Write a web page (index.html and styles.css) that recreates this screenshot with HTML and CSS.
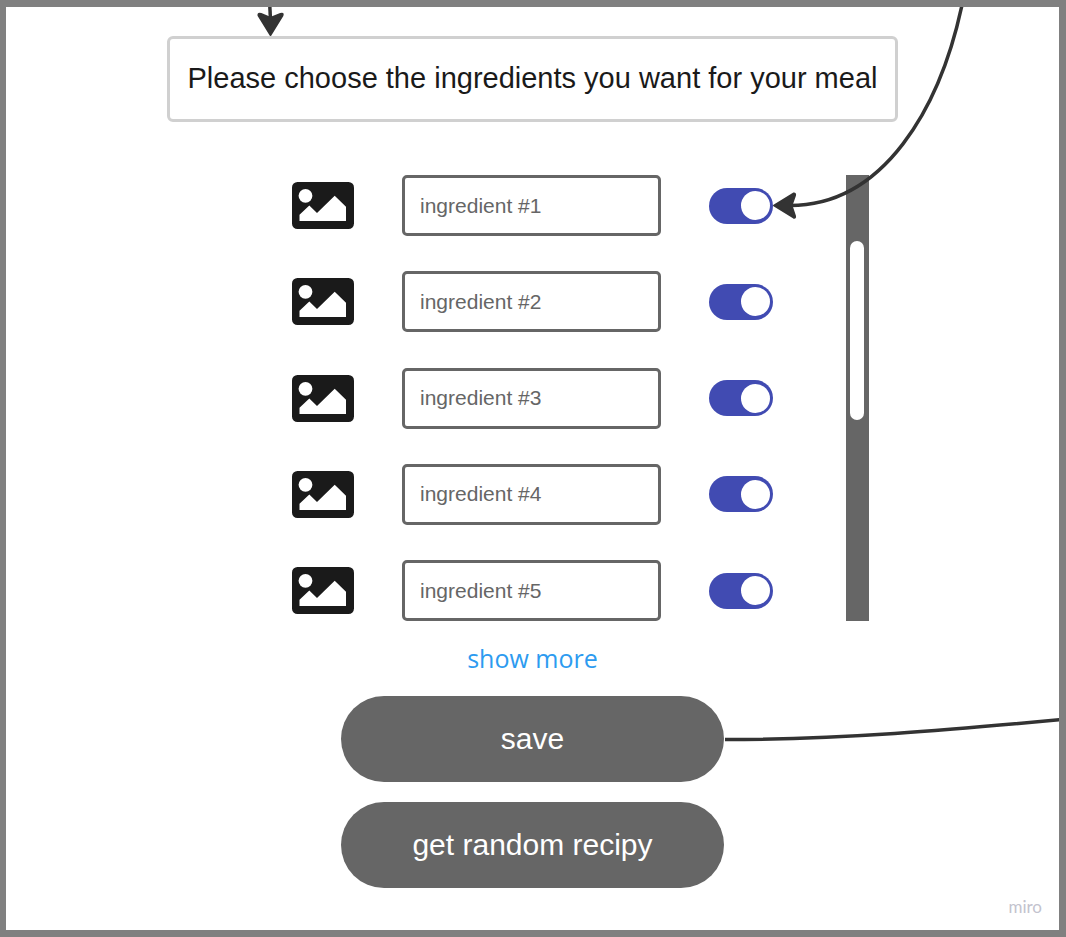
FILE: index.html
```html
<!DOCTYPE html>
<html lang="en">
<head>
<meta charset="utf-8">
<meta name="viewport" content="width=device-width, initial-scale=1">
<title>Choose ingredients</title>
<link rel="stylesheet" href="styles.css">
</head>
<body>
<svg class="defs" aria-hidden="true">
  <symbol id="picture" viewBox="0 0 62 47">
    <rect width="62" height="47" rx="5.5" fill="#1a1a1a"/>
    <circle cx="13.5" cy="13.8" r="6.9" fill="#fff"/>
    <path d="M7.5 32.7 17.3 23.4 25 31 42.7 13.7 54 24.8V39H7.5z" fill="#fff"/>
  </symbol>
</svg>
<div class="frame">
  <main class="screen">
    <h1 class="title">Please choose the ingredients you want for your meal</h1>
    <div class="picker">
      <ul class="list">
        <li class="row">
          <svg class="picture" aria-hidden="true"><use href="#picture"/></svg>
          <input class="field" type="text" placeholder="ingredient #1" aria-label="Ingredient 1">
          <input class="toggle" type="checkbox" role="switch" aria-label="Use ingredient 1" checked>
        </li>
        <li class="row">
          <svg class="picture" aria-hidden="true"><use href="#picture"/></svg>
          <input class="field" type="text" placeholder="ingredient #2" aria-label="Ingredient 2">
          <input class="toggle" type="checkbox" role="switch" aria-label="Use ingredient 2" checked>
        </li>
        <li class="row">
          <svg class="picture" aria-hidden="true"><use href="#picture"/></svg>
          <input class="field" type="text" placeholder="ingredient #3" aria-label="Ingredient 3">
          <input class="toggle" type="checkbox" role="switch" aria-label="Use ingredient 3" checked>
        </li>
        <li class="row">
          <svg class="picture" aria-hidden="true"><use href="#picture"/></svg>
          <input class="field" type="text" placeholder="ingredient #4" aria-label="Ingredient 4">
          <input class="toggle" type="checkbox" role="switch" aria-label="Use ingredient 4" checked>
        </li>
        <li class="row">
          <svg class="picture" aria-hidden="true"><use href="#picture"/></svg>
          <input class="field" type="text" placeholder="ingredient #5" aria-label="Ingredient 5">
          <input class="toggle" type="checkbox" role="switch" aria-label="Use ingredient 5" checked>
        </li>
      </ul>
      <div class="scrollbar"><div class="thumb"></div></div>
    </div>
    <a class="more" href="#">show more</a>
    <div class="actions">
      <button class="button" type="button">save</button>
      <button class="button" type="button">get random recipy</button>
    </div>
  </main>
  <footer class="brand">miro</footer>
  <svg class="connectors" viewBox="6 7 1053 923" preserveAspectRatio="xMidYMin meet" aria-hidden="true">
    <g fill="none" stroke="#333" stroke-width="3.5">
      <path d="M269.500 0 270.500 20"/>
      <path d="M962 5C940 108 884 205.500 790 205.500"/>
      <path d="M725 739.500C840 739.500 950 730 1062 719.500"/>
    </g>
    <g fill="#333" stroke="#333" stroke-width="2" stroke-linejoin="round">
      <path d="M270.500 35 258.500 15.500Q258 13 261 14L270.500 18 280.500 14Q283.500 13 282.500 15.500z"/>
      <path d="M774 205.500 793.500 193.500Q795.500 193 795 195.500L791.500 205.500 795 216Q795.500 218.500 793.500 217.500z"/>
    </g>
  </svg>
</div>
</body>
</html>
```

FILE: styles.css
```css
* {
  box-sizing: border-box;
}

body {
  margin: 0;
  font-family: "Liberation Sans", Arial, sans-serif;
  background: #fff;
}

.defs {
  display: none;
}

.frame {
  position: relative;
  display: flex;
  flex-direction: column;
  min-height: 100vh;
  border: solid #808080;
  border-width: 7px 7px 7px 6px;
  overflow: hidden;
}

.screen {
  display: flex;
  flex-direction: column;
  align-items: center;
  padding-top: 29px;
}

.title {
  margin: 0;
  padding: 20px 18px 22px;
  border: 3px solid #d0d0d0;
  border-radius: 6px;
  color: #1a1a1a;
  font-size: 29px;
  font-weight: 400;
  line-height: 38px;
}

.picker {
  display: grid;
  grid-template-columns: 1fr auto 1fr;
  align-self: stretch;
  margin-top: 53px;
}

.list {
  grid-column: 2;
  display: flex;
  flex-direction: column;
  justify-content: space-between;
  height: 446px;
  margin: 0;
  padding: 0;
  list-style: none;
}

.row {
  display: flex;
  align-items: center;
  gap: 48px;
}

.picture {
  width: 62px;
  height: 47px;
}

.field {
  width: 259px;
  height: 61px;
  padding: 0 15px;
  border: 3px solid #666;
  border-radius: 5px;
  background: #fff;
  color: #666;
  font: 21px "Liberation Sans", Arial, sans-serif;
}

.field::placeholder {
  color: #666;
  opacity: 1;
}

.toggle {
  display: flex;
  align-items: center;
  justify-content: flex-end;
  width: 64px;
  height: 36px;
  margin: 0;
  padding: 3px;
  border-radius: 18px;
  background: #414bb2;
  appearance: none;
}

.toggle::before {
  content: "";
  width: 29px;
  height: 29px;
  border-radius: 50%;
  background: #fff;
}

.toggle:not(:checked) {
  justify-content: flex-start;
  background: #808080;
}

.scrollbar {
  width: 23px;
  height: 446px;
  margin-left: 73px;
  padding: 66px 5px 0 4px;
  background: #666;
}

.thumb {
  height: 179px;
  border-radius: 7px;
  background: #fff;
}

.more {
  margin-top: 19px;
  color: #2d9bf0;
  font-family: "Open Sans", sans-serif;
  font-size: 25px;
  line-height: 36px;
  text-decoration: none;
}

.actions {
  display: flex;
  flex-direction: column;
  gap: 20px;
  margin-top: 20px;
}

.button {
  width: 383px;
  height: 86px;
  padding: 0;
  border: 0;
  border-radius: 43px;
  background: #666;
  color: #fff;
  font: 30px "Liberation Sans", Arial, sans-serif;
}

.brand {
  margin-top: auto;
  padding: 0 17px 13px;
  color: #c3c3ce;
  font-family: Lato, sans-serif;
  font-size: 17px;
  line-height: 20px;
  text-align: right;
}

.connectors {
  position: absolute;
  inset: 0;
  width: 100%;
  height: 100%;
  pointer-events: none;
}
```
